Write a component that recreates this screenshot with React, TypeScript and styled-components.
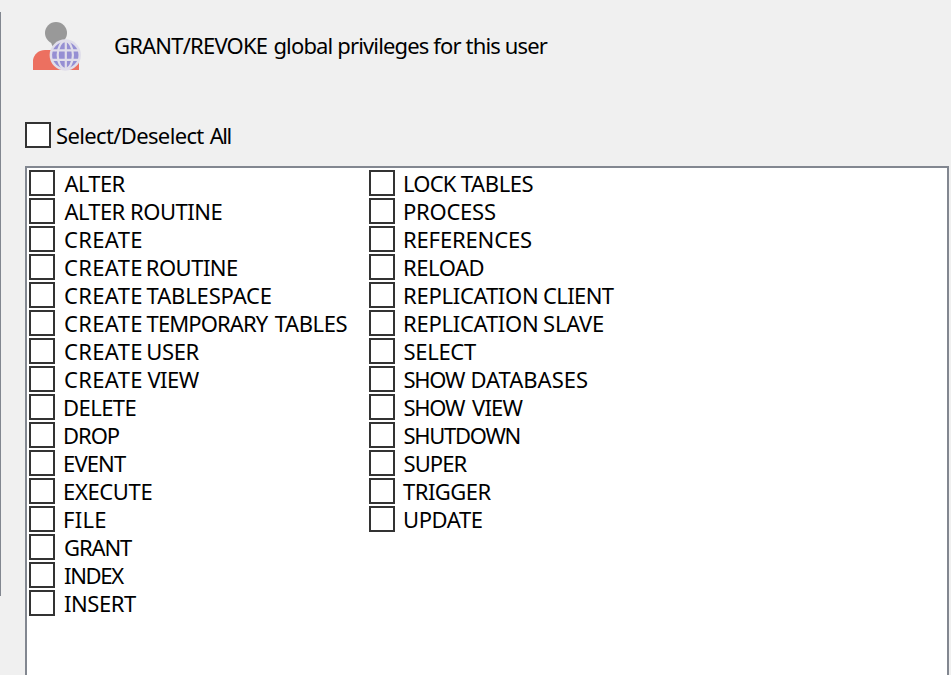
import React from "react";
import styled, { createGlobalStyle } from "styled-components";

const GlobalStyle = createGlobalStyle`
  *, *::before, *::after { box-sizing: border-box; }
  body { margin: 0; background: #f0f0f0; overflow: hidden; }
`;

const Page = styled.main`
  display: grid;
  grid-template-columns: 1px 1fr;
  width: 951px;
  height: 675px;
  overflow: hidden;
  background: #f0f0f0;
  color: #000;
  font: 22px/28px "Noto Sans", sans-serif;
`;

const Divider = styled.div`
  height: 584px;
  margin-top: 12px;
  background: #828790;
`;

const Content = styled.div`
  display: flex;
  flex-direction: column;
  padding: 0 2px 0 24px;
`;

const Header = styled.header`
  display: flex;
  align-items: flex-start;
  height: 121px;
  padding: 16px 0 0 3px;
`;

const HeaderIcon = styled.svg`
  width: 60px;
  height: 60px;
  flex: none;
`;

const Title = styled.div`
  padding: 15px 0 0 26px;
`;

const SelectAll = styled.label`
  display: flex;
  align-items: center;
  gap: 5px;
  height: 28px;
  margin-bottom: 17px;
`;

const CheckBox = styled.input`
  appearance: none;
  flex: none;
  width: 26px;
  height: 26px;
  margin: 0;
  border: 2px solid #333;
  background: #fff;
  &:checked { background: #333; box-shadow: inset 0 0 0 4px #fff; }
`;

const Panel = styled.section`
  display: grid;
  grid-template-columns: 340px 1fr;
  align-items: start;
  height: 540px;
  padding: 1px 2px;
  border: 2px solid #828790;
  background: #fff;
`;

const Column = styled.div`
  display: flex;
  flex-direction: column;
`;

const Row = styled.label<{ $indent: number }>`
  display: flex;
  align-items: center;
  gap: ${(p) => p.$indent}px;
  height: 28px;
`;

const Line = styled.span`
  display: flex;
  white-space: pre;
`;

const Word = styled.span<{ $track: number; $gap: number }>`
  letter-spacing: ${(p) => p.$track}px;
  margin-left: ${(p) => p.$gap}px;
`;

// Text, letter spacing, space before the word.
type Part = [string, number, number?];
type Item = { indent: number; parts: Part[] };

const CREATE: Part = ["CREATE", 0.35];

const left: Item[] = [
  { indent: 9.5, parts: [["ALTER", -0.65]] },
  { indent: 9.5, parts: [["ALTER", -0.65], ["ROUTINE", -0.5, 5.5]] },
  { indent: 9, parts: [CREATE] },
  { indent: 9, parts: [CREATE, ["ROUTINE", -0.5, 2.8]] },
  { indent: 9, parts: [CREATE, ["TABLESPACE", -0.15, 3.7]] },
  { indent: 9, parts: [CREATE, ["TEMPORARY", -0.9, 3.7], ["TABLES", -0.4, 7.4]] },
  { indent: 9, parts: [CREATE, ["USER", -0.4, 3.4]] },
  { indent: 9, parts: [CREATE, ["VIEW", -0.5, 4.5]] },
  { indent: 8, parts: [["DELETE", -0.55]] },
  { indent: 8, parts: [["DROP", -1.05]] },
  { indent: 8, parts: [["EVENT", -0.85]] },
  { indent: 8, parts: [["EXECUTE", -0.35]] },
  { indent: 8, parts: [["FILE", 0.3]] },
  { indent: 9, parts: [["GRANT", -1.1]] },
  { indent: 9, parts: [["INDEX", -1.3]] },
  { indent: 9, parts: [["INSERT", -0.45]] },
];

const right: Item[] = [
  { indent: 8, parts: [["LOCK", -0.8], ["TABLES", -0.4, 5.2]] },
  { indent: 8, parts: [["PROCESS", -0.25]] },
  { indent: 8, parts: [["REFERENCES", -0.15]] },
  { indent: 8, parts: [["RELOAD", -0.45]] },
  { indent: 8, parts: [["REPLICATION", -0.25], ["CLIENT", -0.6, 4.5]] },
  { indent: 8, parts: [["REPLICATION", -0.25], ["SLAVE", -0.25, 4.6]] },
  { indent: 8.5, parts: [["SELECT", -0.3]] },
  { indent: 8.5, parts: [["SHOW", -1.3], ["DATABASES", 0, 6.3]] },
  { indent: 8.5, parts: [["SHOW", -1.3], ["VIEW", -0.8, 7.9]] },
  { indent: 8.5, parts: [["SHUTDOWN", -1.3]] },
  { indent: 8.5, parts: [["SUPER", -0.9]] },
  { indent: 8, parts: [["TRIGGER", -0.52]] },
  { indent: 8, parts: [["UPDATE", -0.4]] },
];

function Label({ parts }: { parts: Part[] }) {
  return (
    <Line>
      {parts.map(([text, track, gap = 0], i) => (
        <Word key={i} $track={track} $gap={gap}>{text}</Word>
      ))}
    </Line>
  );
}

function PrivilegeColumn({ items }: { items: Item[] }) {
  return (
    <Column>
      {items.map((item, i) => (
        <Row key={i} $indent={item.indent}>
          <CheckBox type="checkbox" />
          <Label parts={item.parts} />
        </Row>
      ))}
    </Column>
  );
}

function UserGlobeIcon() {
  return (
    <HeaderIcon viewBox="28 16 60 60" aria-hidden="true">
      <path d="M33 70V60C34 54 39 50 45 50H67C74 51 79 56 79 62V70Z" fill="#ec7060" />
      <path d="M51 40H62V48H56C53 48 51 45 51 40Z" fill="#999" />
      <circle cx="56" cy="33" r="11" fill="#999" />
      <circle cx="65.3" cy="55" r="15.7" fill="#e0deea" />
      <circle cx="65.3" cy="55" r="13.2" fill="#958fd3" />
      <g fill="none" stroke="#e0deea" strokeWidth="2.2">
        <path d="M65.8 41V69M52 50.4H79M52 59.8H79" />
        <ellipse cx="65.3" cy="55" rx="7.6" ry="13.8" />
      </g>
    </HeaderIcon>
  );
}

export default function App() {
  return (
    <>
      <GlobalStyle />
      <Page>
        <Divider />
        <Content>
          <Header>
            <UserGlobeIcon />
            <Title>
              <Label parts={[["GRANT/REVOKE", -0.8], ["global privileges for this user", -0.85, 6.2]]} />
            </Title>
          </Header>
          <SelectAll>
            <CheckBox type="checkbox" />
            <Label parts={[["Select/Deselect", -0.64], ["All", -1.4, 6]]} />
          </SelectAll>
          <Panel>
            <PrivilegeColumn items={left} />
            <PrivilegeColumn items={right} />
          </Panel>
        </Content>
      </Page>
    </>
  );
}
